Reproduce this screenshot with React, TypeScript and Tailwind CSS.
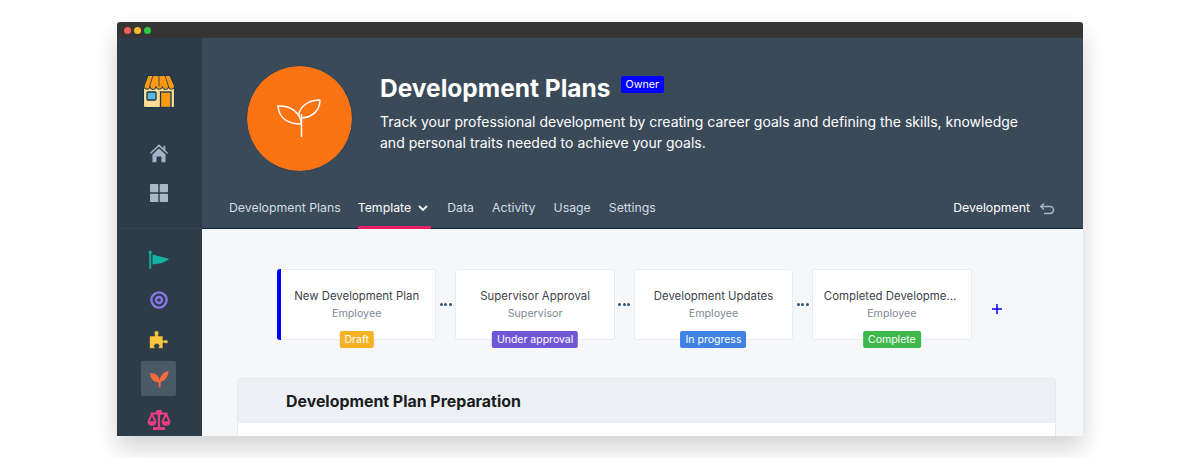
const font = { fontFamily: "Inter, 'Liberation Sans', sans-serif" };

function StoreIcon() {
  return (
    <svg width="32" height="33" viewBox="0 0 32 33" fill="none" stroke="#12364f" strokeWidth="1">
      <rect x=".5" y="10" width="31" height="22.500" rx="1.500" fill="#fbdc95" />
      <rect x="4" y="17" width="9" height="8" rx="1" fill="#5bb8dc" strokeWidth="1.300" />
      <rect x="17.500" y="17" width="10.500" height="15.500" fill="#fb9a12" strokeWidth="1.300" />
      <path d="M5 .5h22l4.500 10.500a3 3 0 0 1-6 .5 3 3 0 0 1-6 0 3.300 3.300 0 0 1-6.500 0 3 3 0 0 1-6 0 3 3 0 0 1-6-.5z" fill="#fb9a12" />
      <path d="M10 .5L6.500 11.500M16 .5v11M22 .5l3.500 11" strokeWidth=".8" />
    </svg>
  );
}

function HomeIcon() {
  return (
    <svg width="20" height="20" viewBox="0 0 20 20">
      <path d="M10 1L.8 9.800l1 1.400L10 3.800l8.200 7.400 1-1.400-2.600-2.500V2.500h-2.400v2.500z" fill="#a3b4c6" stroke="#1b3347" strokeWidth=".4" />
      <path d="M3.200 11.400L10 5.200l6.800 6.200v8H12.200v-5.600H7.800v5.600H3.200z" fill="#a3b4c6" stroke="#1b3347" strokeWidth=".4" />
    </svg>
  );
}

function GridIcon() {
  return (
    <svg width="20" height="20" viewBox="0 0 20 20" fill="#a9b8c8">
      <rect x="1" y="1" width="8.300" height="8.300" rx=".8" />
      <rect x="10.700" y="1" width="8.300" height="8.300" rx=".8" />
      <rect x="1" y="10.700" width="8.300" height="8.300" rx=".8" />
      <rect x="10.700" y="10.700" width="8.300" height="8.300" rx=".8" />
    </svg>
  );
}

function FlagIcon() {
  return (
    <svg width="22" height="20" viewBox="0 0 22 20">
      <rect x="1.200" y="1" width="2" height="18" rx="1" fill="#14a597" />
      <circle cx="2.200" cy="2.200" r="1.800" fill="#14a597" />
      <path d="M4.500 4.500l16 4.300q.8.500 0 1L14 13l-9.500 1.500z" fill="#14b3a2" />
    </svg>
  );
}

function TargetIcon() {
  return (
    <svg width="20" height="20" viewBox="0 0 20 20" fill="none" stroke="#8a76ea" strokeWidth="2.400">
      <circle cx="10" cy="10" r="7.600" />
      <circle cx="10" cy="10" r="3" />
    </svg>
  );
}

function PuzzleIcon() {
  return (
    <svg width="22" height="20" viewBox="0 0 22 20">
      <path d="M1.500 6h4.700c.8 0 .6-1 .2-1.500C5.600 3 6.500.8 8.500.8s3 2.200 2.100 3.700c-.4.500-.6 1.500.2 1.500H15v4c0 .8 1 .6 1.500.2 1.500-1 3.700 0 3.700 1.500S18 14.200 16.500 13.200c-.5-.4-1.500-.6-1.500.2v5h-4c-.8 0-.6-1-.2-1.500.8-1.300 0-3-2.100-3s-2.900 1.700-2.100 3c.4.500.6 1.500-.2 1.500H1.500z" fill="#fcc33e" stroke="#1b3347" strokeWidth=".6" />
    </svg>
  );
}

function SproutFilled() {
  return (
    <svg width="20" height="20" viewBox="0 0 20 20" fill="#fb6a3c">
      <path d="M1 4c6 0 9.500 3 10 9.500C5 13.500 1.500 10.500 1 4z" />
      <path d="M19.500 2c-.5 6-3.500 10-9 11 .2-6 3.500-10 9-11z" />
      <rect x="9.600" y="11" width="2" height="7.500" rx="1" />
    </svg>
  );
}

function ScalesIcon() {
  return (
    <svg width="24" height="20" viewBox="0 0 24 20" fill="none" stroke="#ee3d82" strokeWidth="2.200">
      <path d="M12 1v16M3.500 3.500h17" />
      <circle cx="12" cy="2.200" r="1.800" fill="#ee3d82" />
      <path d="M6 18.500h12" strokeWidth="2.800" />
      <path d="M5 4L1.500 11.500M5 4l3.500 7.500M19 4l-3.500 7.500M19 4l3.500 7.500" strokeWidth="1.800" />
      <path d="M.8 11.500h8.400a4.200 4 0 0 1-8.400 0zM14.800 11.500h8.400a4.200 4 0 0 1-8.400 0z" fill="#ee3d82" strokeWidth=".5" />
    </svg>
  );
}

function Dots() {
  return (
    <div className="flex w-[19px] shrink-0 items-center justify-center gap-[1.500px]">
      <span className="h-[3px] w-[3px] rounded-full bg-[#2f5478]" />
      <span className="h-[3px] w-[3px] rounded-full bg-[#2f5478]" />
      <span className="h-[3px] w-[3px] rounded-full bg-[#2f5478]" />
    </div>
  );
}

function StepCard({ title, role, badge, badgeClass, accent }: { title: string; role: string; badge: string; badgeClass: string; accent?: boolean }) {
  return (
    <div className="relative flex h-[71px] w-[159.400px] shrink-0 flex-col items-center rounded-[3px] border border-[#e8ebf0] bg-white pt-[18px]">
      {accent && <span className="absolute -bottom-px -left-px -top-px w-[4px] rounded-l-[3px] bg-[#0000ff]" />}
      <div className="w-[136px] truncate text-center text-[11.400px] leading-[17px] text-[#3d4248]">{title}</div>
      <div className="text-[10.700px] leading-[17px] text-[#7e8998]">{role}</div>
      <span className={"absolute left-1/2 top-[61px] -translate-x-1/2 whitespace-nowrap rounded-[2px] px-[5px] text-[10.500px] leading-[17px] text-white " + badgeClass}>{badge}</span>
    </div>
  );
}

export default function App() {
  return (
    <div className="h-[458px] overflow-hidden bg-white pt-[22px]" style={font}>
      <div className="mx-auto flex h-[414px] w-[966px] flex-col overflow-hidden rounded-t-[3px] shadow-[0_12px_24px_rgba(0,0,0,0.18)]">
        <div className="flex h-[16px] shrink-0 items-center gap-[3px] bg-[#353535] pl-[7px]">
          <span className="h-[7px] w-[7px] rounded-full bg-[#f95d57]" />
          <span className="h-[7px] w-[7px] rounded-full bg-[#fbb92e]" />
          <span className="h-[7px] w-[7px] rounded-full bg-[#2dc840]" />
        </div>
        <div className="flex min-h-0 flex-1">
          <aside className="flex w-[85px] shrink-0 flex-col items-center bg-[#2d3c49] pr-[2px] pt-[37px]">
            <StoreIcon />
            <div className="mt-[35px] flex flex-col items-center gap-[20px]">
              <HomeIcon />
              <GridIcon />
            </div>
            <div className="ml-[2px] mt-[25px] h-px w-[85px] shrink-0 bg-[#334350]" />
            <div className="mt-[21px] flex flex-col items-center gap-[20px]">
              <FlagIcon />
              <TargetIcon />
              <PuzzleIcon />
            </div>
            <div className="mt-[11px] flex h-[35px] w-[35px] shrink-0 items-center justify-center rounded-[2px] bg-[#4a5965]">
              <SproutFilled />
            </div>
            <div className="mt-[14px]">
              <ScalesIcon />
            </div>
          </aside>
          <main className="flex min-w-0 flex-1 flex-col bg-[#f5f7f9]">
            <header className="h-[191px] shrink-0 border-b border-[#0e2240] bg-[#3b4a59]">
              <div className="flex items-start pl-[43.500px] pt-[27px]">
                <div className="flex h-[107px] w-[107px] shrink-0 items-center justify-center rounded-full border border-[#1c4160] bg-[#fb7312]">
                  <svg width="46" height="46" viewBox="0 0 46 46" fill="none" stroke="#fff" strokeWidth="1.500">
                    <path d="M25.500 18V41" />
                    <path d="M2 10c12-.5 22.500 6 23.500 18C13 28 3 23 2 10z" />
                    <path d="M44 4C33 4 23.500 10 22.500 20M26 22c11-1 18-8 18-18" />
                  </svg>
                </div>
                <div className="ml-[27.500px] mt-[9px] w-[650px]">
                  <div className="flex items-start">
                    <h1 className="text-[24.500px] font-bold leading-[29px] text-white">Development Plans</h1>
                    <span className="ml-[10px] mt-[2px] rounded-[2px] bg-[#0000ff] px-[5px] text-[10.700px] leading-[17px] text-white">Owner</span>
                  </div>
                  <p className="mt-[8px] text-[14px] leading-[21px] text-white">
                    Track your professional development by creating career goals and defining the skills, knowledge and personal traits needed to achieve your goals.
                  </p>
                </div>
              </div>
              <nav className="mt-[15px] flex h-[42px] items-start pl-[27px] pr-[28px] text-[12.300px] leading-[42px]">
                <a className="text-[#d4dce4]">Development Plans</a>
                <a className="ml-[17px] flex h-[42px] items-center gap-[6px] border-b-[3px] border-[#e91e63] pt-[3px] text-white">
                  Template
                  <svg width="12" height="12" viewBox="0 0 12 12" fill="none" stroke="#fff" strokeWidth="1.800" className="mr-[2px]">
                    <path d="M2 4l4 4 4-4" />
                  </svg>
                </a>
                <a className="ml-[16px] text-[#d4dce4]">Data</a>
                <a className="ml-[18px] text-[#d4dce4]">Activity</a>
                <a className="ml-[18px] text-[#d4dce4]">Usage</a>
                <a className="ml-[18px] text-[#d4dce4]">Settings</a>
                <div className="ml-auto flex items-center gap-[9px] text-white">
                  Development
                  <svg width="16" height="16" viewBox="0 0 16 16" fill="none" stroke="#a9b6c3" strokeWidth="1.500" className="mt-px">
                    <path d="M5 2.500L1.800 5.500 5 8.500M2 5.500h9a3.500 3.500 0 0 1 0 7H5" />
                  </svg>
                </div>
              </nav>
            </header>
            <div className="flex min-h-0 flex-1 flex-col pl-[35px] pr-[27px] pt-[40px]">
              <div className="flex pl-[40px]">
                <StepCard accent title="New Development Plan" role="Employee" badge="Draft" badgeClass="bg-[#f5b225]" />
                <Dots />
                <StepCard title="Supervisor Approval" role="Supervisor" badge="Under approval" badgeClass="bg-[#6f56d6]" />
                <Dots />
                <StepCard title="Development Updates" role="Employee" badge="In progress" badgeClass="bg-[#3f82e4]" />
                <Dots />
                <StepCard title="Completed Development Plan" role="Employee" badge="Complete" badgeClass="bg-[#3cb94a]" />
                <div className="ml-[19px] flex items-center pt-[8px]">
                  <svg width="12" height="12" viewBox="0 0 12 12" stroke="#0000ff" strokeWidth="1.500">
                    <path d="M6 1v10M1 6h10" />
                  </svg>
                </div>
              </div>
              <section className="mt-[38px] flex-1 rounded-t-[3px] border border-b-0 border-[#e6eaef] bg-white">
                <div className="flex h-[44px] items-center bg-[#edf1f5] pl-[48px] pt-[2px] text-[15.900px] font-bold text-[#1a1d21]">
                  Development Plan Preparation
                </div>
              </section>
            </div>
          </main>
        </div>
      </div>
    </div>
  );
}
